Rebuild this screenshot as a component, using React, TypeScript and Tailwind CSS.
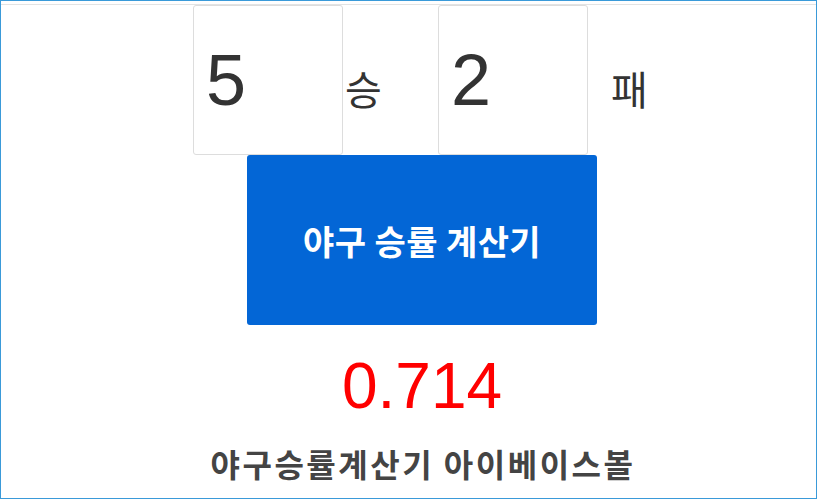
import React from "react";

// 야구 승률 계산기 — 승/패 입력 + 결과
const KR = "font-['Noto_Sans_CJK_KR','Noto_Sans',sans-serif]";
const LAT = "font-['Liberation_Sans',Arial,sans-serif]";

function NumBox({ value }: { value: string }) {
  return (
    <input
      type="text"
      readOnly
      defaultValue={value}
      className={`h-[150px] w-[150px] shrink-0 rounded-[3px] border border-[#dddddd] bg-white px-[12px] text-[72px] text-[#333333] outline-none ${LAT}`}
    />
  );
}

export default function App() {
  const wins = 5;
  const losses = 2;
  const rate = (wins / (wins + losses)).toFixed(3);

  return (
    <div className="h-[499px] w-[817px] overflow-hidden border border-[#3a9ad9] bg-white">
      <div className="mt-[3px] h-px bg-[#e3e3e3]" />
      <div className="ml-[192px] flex items-baseline">
        <NumBox value={String(wins)} />
        <span className={`w-[95px] pl-[2px] text-[40px] text-[#333333] ${KR}`}>승</span>
        <NumBox value={String(losses)} />
        <span className={`pl-[23px] text-[40px] text-[#333333] ${KR}`}>패</span>
      </div>
      <div className="ml-[246px] flex w-[350px] flex-col items-center">
        <button
          type="button"
          className={`flex h-[170px] w-[350px] items-center justify-center rounded-[3px] bg-[#0366d6] text-[34px] font-bold tracking-[0.4px] text-white ${KR}`}
        >
          야구 승률 계산기
        </button>
        <div className={`mt-[29px] text-[64px] leading-none text-[#ff0000] ${LAT}`}>{rate}</div>
        <div
          className={`mt-[29px] whitespace-nowrap pl-[2px] text-[32px] font-bold leading-none tracking-[2.5px] text-[#444444] ${KR}`}
        >
          야구승률계산기 아이베이스볼
        </div>
      </div>
    </div>
  );
}
